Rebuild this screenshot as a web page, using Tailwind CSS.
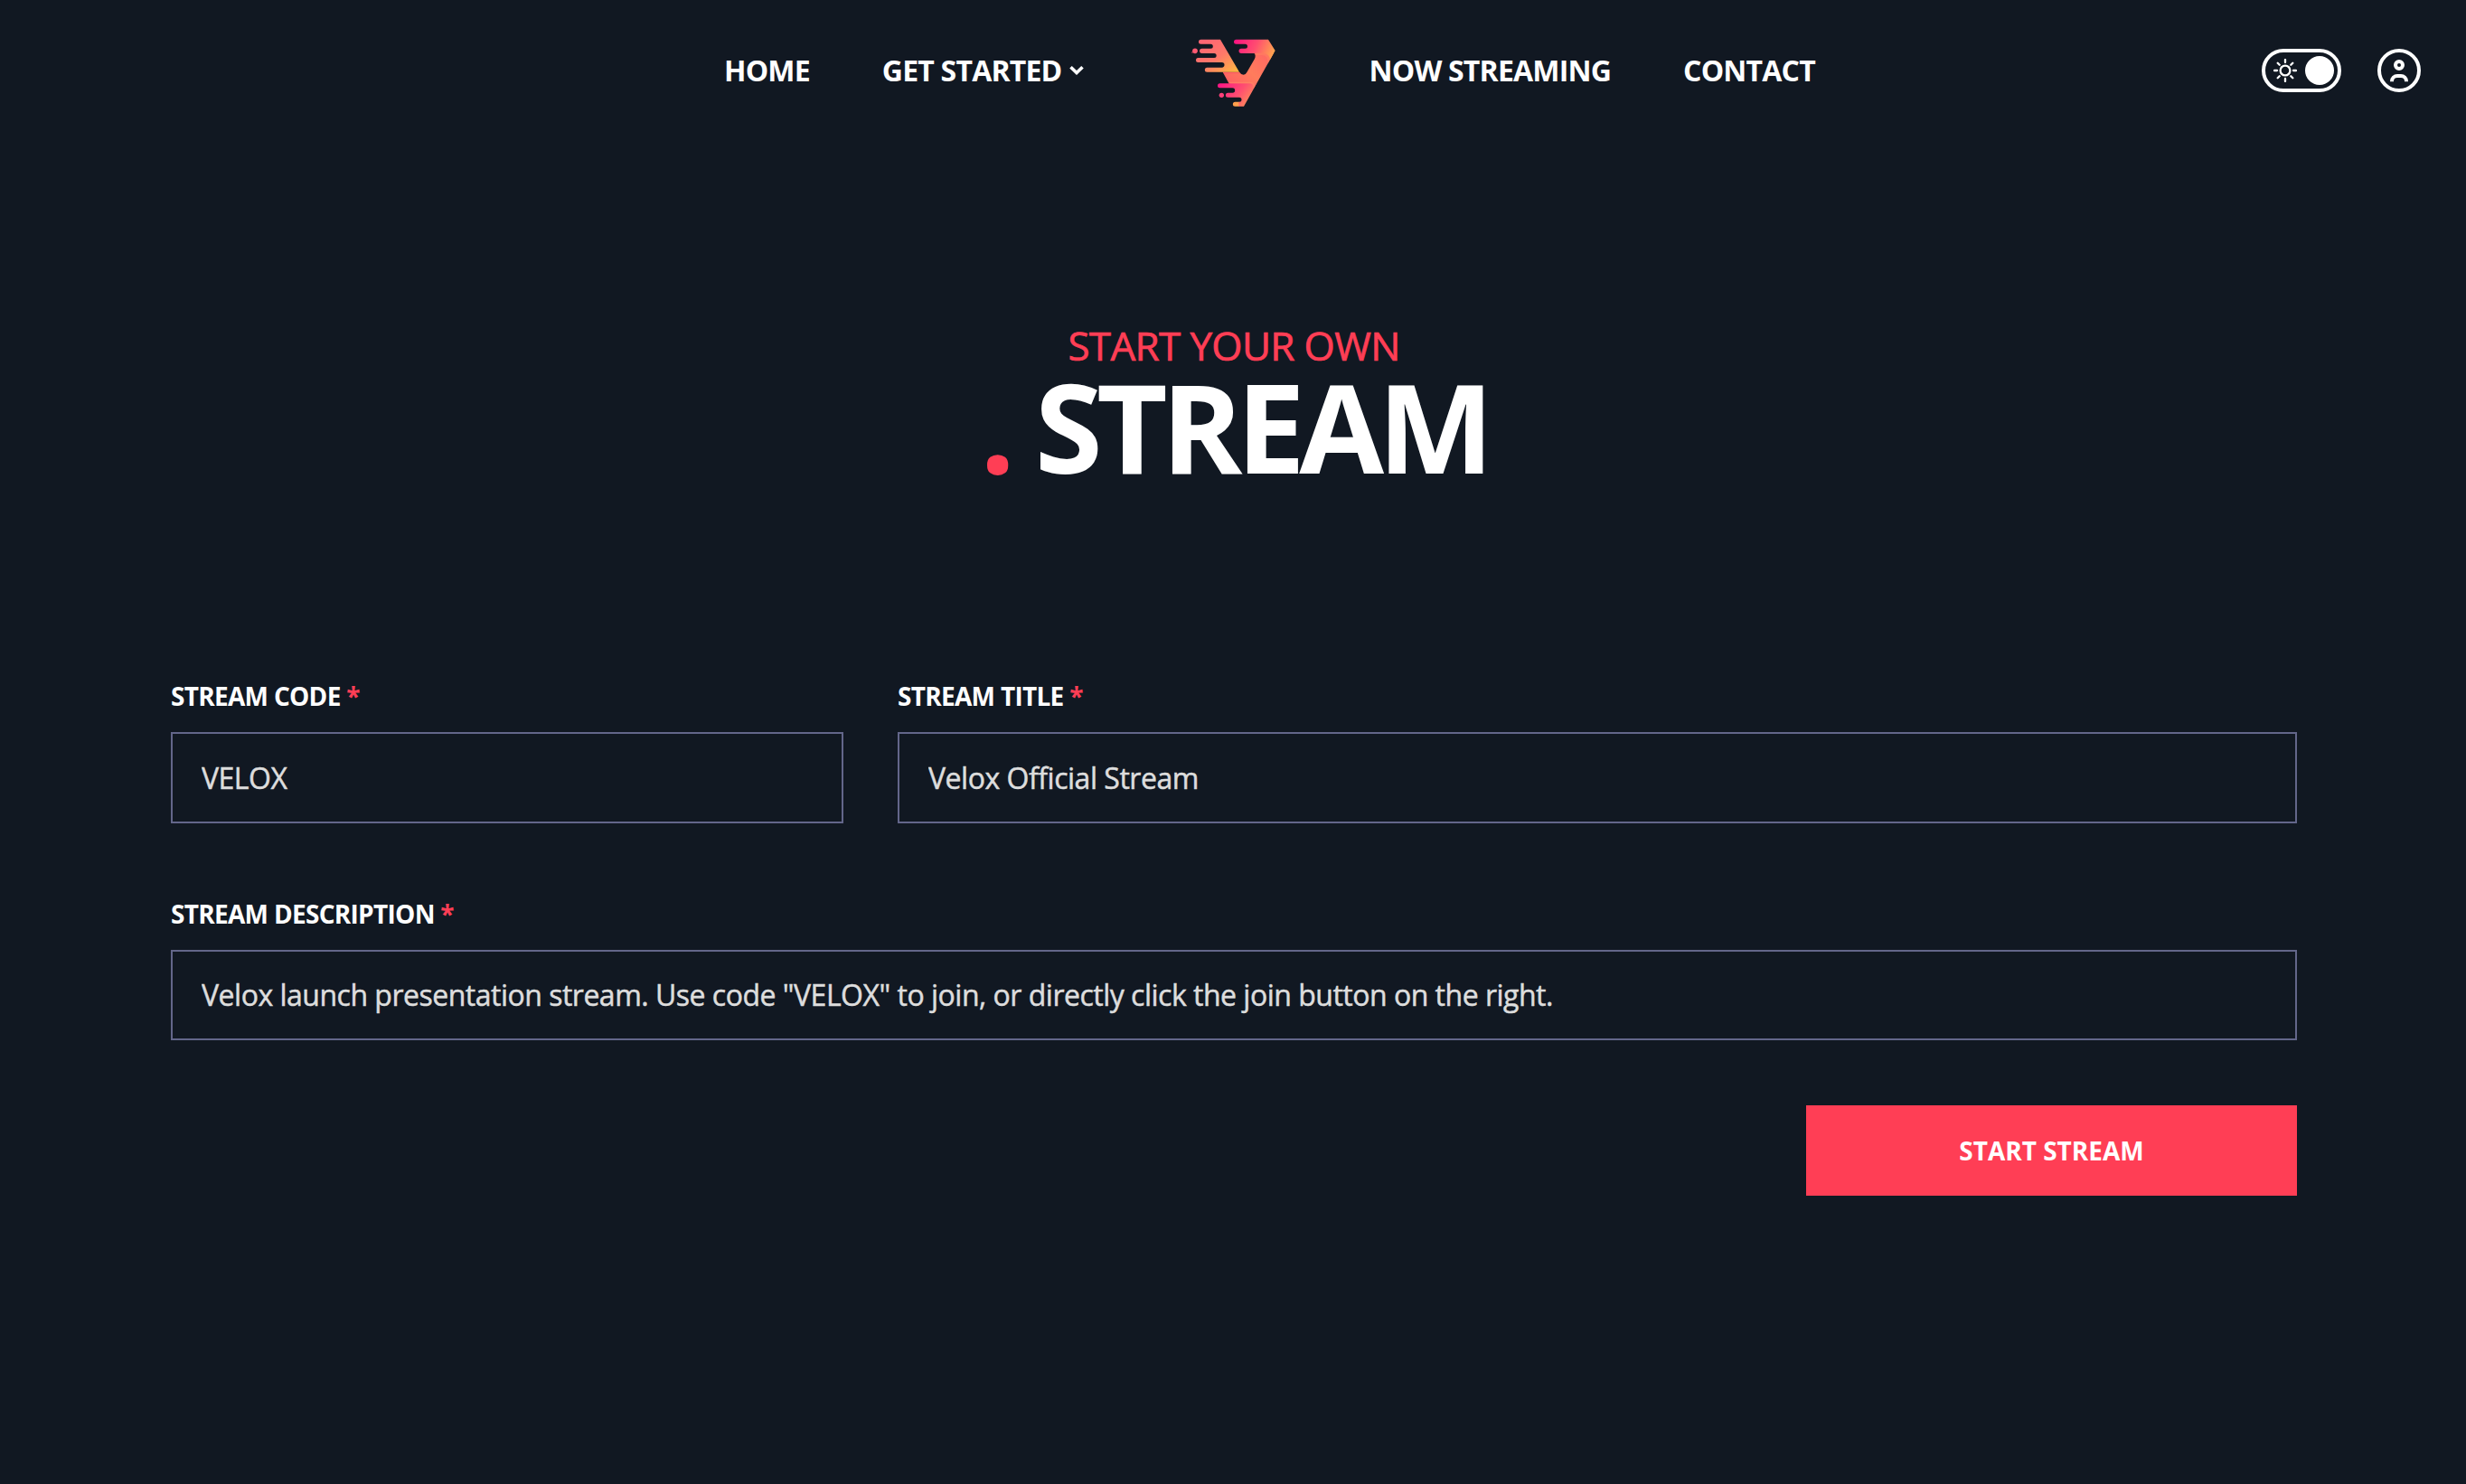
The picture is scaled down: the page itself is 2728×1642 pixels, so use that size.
<!DOCTYPE html>
<html lang="en">
<head>
  <meta charset="UTF-8" />
  <meta name="viewport" content="width=device-width, initial-scale=1.0"/>
  <title>Velox - Start Stream</title>
  <script src="https://cdn.jsdelivr.net/npm/@tailwindcss/browser@4"></script>
</head>
<body class="min-h-screen bg-[#111822] text-white font-['Open_Sans',sans-serif]">
  <header class="flex items-center h-[156px] pl-[801px] pr-[50px]">
    <nav class="flex items-center text-[32px] leading-[44px] font-bold tracking-[-0.8px] whitespace-nowrap">
      <a href="#" class="mr-20">HOME</a>
      <a href="#" class="flex items-center">
        GET STARTED
        <svg class="ml-2 w-4 h-3" viewBox="0 0 16 12" fill="none" stroke="#fff" stroke-width="3.6"><path d="M1.5 2.3 8 8.6l6.500-6.300"/></svg>
      </a>
      <a href="#" class="ml-[101px] mr-[85px]">
        <!-- Logo -->
        <svg class="w-[130px] h-[100px] relative top-[2px]" viewBox="0 0 390 300">
          <defs>
            <linearGradient id="arm" gradientUnits="userSpaceOnUse" x1="100" y1="45" x2="180" y2="160">
              <stop offset="0" stop-color="#ff6673"/><stop offset=".5" stop-color="#ff7869"/><stop offset="1" stop-color="#ffb443"/>
            </linearGradient>
            <linearGradient id="top" gradientUnits="userSpaceOnUse" x1="200" y1="45" x2="325" y2="100">
              <stop offset="0" stop-color="#ff1480"/><stop offset=".5" stop-color="#ff4d70"/><stop offset="1" stop-color="#ffa94c"/>
            </linearGradient>
            <linearGradient id="body" gradientUnits="userSpaceOnUse" x1="290" y1="88" x2="190" y2="190">
              <stop offset="0" stop-color="#ff6a62"/><stop offset=".5" stop-color="#ff7c5c"/><stop offset="1" stop-color="#ff6562"/>
            </linearGradient>
            <linearGradient id="tail" gradientUnits="userSpaceOnUse" x1="145" y1="190" x2="240" y2="262">
              <stop offset="0" stop-color="#ff1585"/><stop offset=".6" stop-color="#ff4f70"/><stop offset="1" stop-color="#ff8a5a"/>
            </linearGradient>
          </defs>
          <path fill="url(#body)" d="M262 86H327L269 190H180L158 149H213Q219 158 227 158.500Q234 158 238 150L264 105Q269 93 262 86Z"/>
          <path fill="#ff4c6b" opacity=".5" d="M158 149H213L217 154H161Z"/>
          <path fill="url(#top)" d="M202.500 41H309L332 78L314 110Q315 89 291 87H219.500A7.500 7.500 0 0 1 219.500 71H232.500A7.500 7.500 0 0 0 232.500 56H202.500A7.500 7.500 0 0 1 202.500 41Z"/>
          <path fill="#ff8360" opacity=".55" d="M266 86H291Q314 88 314 110L307 122Q311 93 286 93H268Z"/>
          <path fill="url(#arm)" d="M85.500 41H150L213 149H106A7.500 7.500 0 0 1 106 134H155A8.500 8.500 0 0 0 155 117H76.500A7.500 7.500 0 0 1 76.500 102H129.500A7.500 7.500 0 0 0 129.500 87H89A8 8 0 0 1 89 71H118A7.500 7.500 0 0 0 118 56H85.500A7.500 7.500 0 0 1 85.500 41Z"/>
          <circle cx="66" cy="79" r="8.500" fill="#ff5a72"/>
          <circle cx="57" cy="84" r="2" fill="#ff5a72"/>
          <path fill="url(#tail)" d="M148.500 187H270.700L228 263H210V248H213A7.500 7.500 0 0 0 213 233H175A7.500 7.500 0 0 1 175 218H190.500A7.500 7.500 0 0 0 190.500 202H148.500A7.500 7.500 0 0 1 148.500 187Z"/>
          <path fill="#ff8a66" opacity=".6" d="M179 182H247Q266 182 265 197L260 204Q262 187 245 187H182Z"/>
          <path fill="#ff9f4c" d="M199 248H211V263H199A7.500 7.500 0 0 1 199 248Z"/>
          <circle cx="154" cy="226" r="8" fill="#ff4079"/>
        </svg>
      </a>
      <a href="#" class="mr-20">NOW STREAMING</a>
      <a href="#">CONTACT</a>
    </nav>
    <div class="flex items-center gap-10 ml-auto">
      <!-- Theme toggle -->
      <button class="flex items-center justify-between w-[88px] h-12 border-4 border-white rounded-full pl-[9px] pr-1">
        <svg class="w-[26px] h-[26px]" viewBox="0 0 26 26" fill="none" stroke="#fff" stroke-width="2.3" stroke-linecap="round">
          <circle cx="13" cy="13" r="5.400"/>
          <path d="M13 1v3M13 22v3M1 13h3M22 13h3M4.700 4.700l2 2M19.300 19.300l2 2M4.700 21.300l2-2M19.300 6.700l2-2"/>
        </svg>
        <span class="w-8 h-8 rounded-full bg-white"></span>
      </button>
      <!-- Account -->
      <svg class="w-12 h-12" viewBox="0 0 48 48" fill="none" stroke="#fff" stroke-width="4">
        <circle cx="24" cy="24" r="22"/>
        <circle cx="24" cy="18" r="4"/>
        <path d="M16 36.300V36a6 6 0 0 1 6-6h4a6 6 0 0 1 6 6v.300"/>
      </svg>
    </div>
  </header>

  <main class="px-[189px] pt-[204px]">
    <div class="text-center pl-[2px]">
      <h2 class="text-[44px] leading-[44px] tracking-[-0.66px] text-[#ff3e55] [-webkit-text-stroke:0.7px]">START YOUR OWN</h2>
      <h1 class="text-[136px] leading-[136px] font-bold tracking-[-6.8px]"><span class="text-[#ff3e55]">.</span> STREAM</h1>
    </div>

    <form class="w-[2352px] mt-[214px]">
      <div class="grid grid-cols-[744px_1548px] gap-x-[60px]">
        <div>
          <label for="code" class="block text-[28px] leading-8 font-bold tracking-[-0.7px] mb-6">STREAM CODE <span class="text-[#ff3e55]">*</span></label>
          <input id="code" type="text" value="VELOX" class="block w-full h-[101px] border-2 border-[#63668a] px-8 text-[32px] tracking-[-0.5px] text-[#ddd] [-webkit-text-stroke:0.5px]" />
        </div>
        <div>
          <label for="title" class="block text-[28px] leading-8 font-bold tracking-[-0.7px] mb-6">STREAM TITLE <span class="text-[#ff3e55]">*</span></label>
          <input id="title" type="text" value="Velox Official Stream" class="block w-full h-[101px] border-2 border-[#63668a] px-8 text-[32px] tracking-[-0.48px] text-[#ddd] [-webkit-text-stroke:0.5px]" />
        </div>
      </div>
      <div class="mt-[84px]">
        <label for="description" class="block text-[28px] leading-8 font-bold tracking-[-0.7px] mb-6">STREAM DESCRIPTION <span class="text-[#ff3e55]">*</span></label>
        <input id="description" type="text" value='Velox launch presentation stream. Use code "VELOX" to join, or directly click the join button on the right.' class="block w-full h-[100px] border-2 border-[#63668a] px-8 pb-[2px] text-[32px] tracking-[-0.5px] text-[#ddd] [-webkit-text-stroke:0.5px]" />
      </div>
      <button type="button" class="block w-[543px] h-[100px] mt-[72px] ml-auto bg-[#ff3e55] text-[28px] font-bold">START STREAM</button>
    </form>
  </main>
</body>
</html>
